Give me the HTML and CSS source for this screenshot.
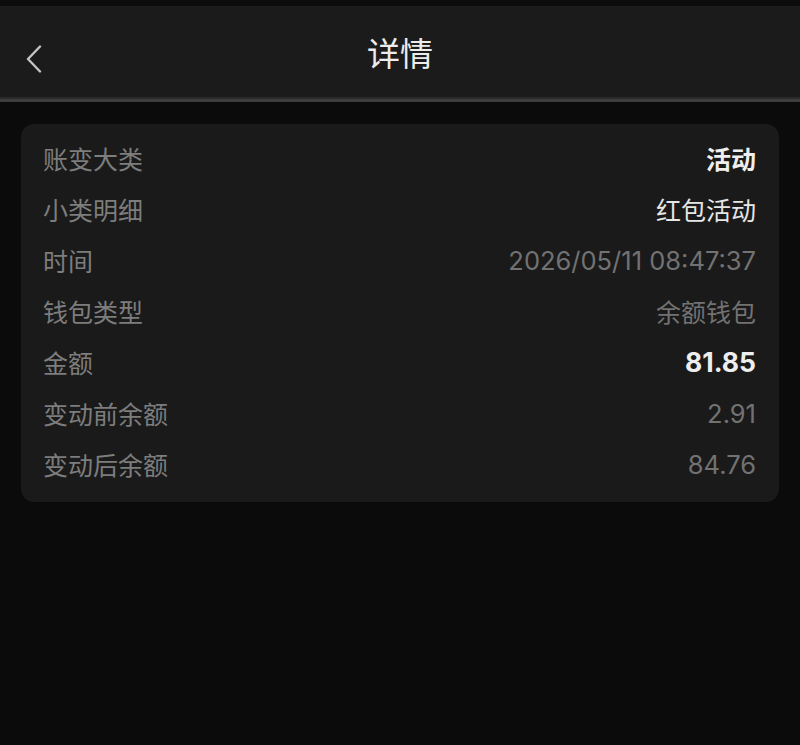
FILE: index.html
```html
<!DOCTYPE html>
<html lang="zh-CN">
<head>
<meta charset="utf-8">
<title>详情</title>
<link rel="stylesheet" href="styles.css">
</head>
<body>
<div class="page">
  <div class="topstrip"></div>
  <header class="navbar">
    <button class="back" aria-label="返回">
      <svg width="18" height="28" viewBox="0 0 18 28"><path d="M15 1.5 L3 14 L15 26.5" fill="none" stroke="#c4c4c4" stroke-width="2.4" stroke-linecap="round" stroke-linejoin="round"/></svg>
    </button>
    <h1 class="title">详情</h1>
  </header>
  <div class="divider"></div>
  <main class="content">
    <section class="card">
      <div class="row"><span class="label">账变大类</span><span class="value cjk strong">活动</span></div>
      <div class="row"><span class="label">小类明细</span><span class="value cjk light">红包活动</span></div>
      <div class="row"><span class="label">时间</span><span class="value num muted">2026/05/11 08:47:37</span></div>
      <div class="row"><span class="label">钱包类型</span><span class="value cjk muted">余额钱包</span></div>
      <div class="row"><span class="label">金额</span><span class="value num strong">81.85</span></div>
      <div class="row"><span class="label">变动前余额</span><span class="value num muted">2.91</span></div>
      <div class="row"><span class="label">变动后余额</span><span class="value num muted">84.76</span></div>
    </section>
  </main>
</div>
</body>
</html>
```

FILE: styles.css
```css
html, body {
  margin: 0;
  padding: 0;
  background: #0b0b0b;
}
body {
  font-family: "Noto Sans CJK SC", sans-serif;
  width: 800px;
  height: 745px;
  overflow: hidden;
}
.page {
  display: flex;
  flex-direction: column;
}
.topstrip {
  height: 6px;
  background: #0c0c0c;
}
.navbar {
  height: 91px;
  background: #1b1b1b;
  display: flex;
  align-items: center;
  justify-content: center;
  position: relative;
}
.back {
  position: absolute;
  left: 25px;
  top: 39px;
  width: 18px;
  height: 28px;
  padding: 0;
  border: 0;
  background: none;
  display: flex;
}
.title {
  margin: 0;
  font-family: "Noto Sans CJK SC", sans-serif;
  font-size: 33px;
  font-weight: 400;
  color: #ececec;
  line-height: 1;
  margin-top: 2px;
}
.divider {
  height: 2px;
  background: #2a2a2a;
  border-bottom: 3px solid #3d3d3d;
}
.content {
  padding: 22px 21px 0;
}
.card {
  background: #1a1a1a;
  border-radius: 13px;
  padding: 9px 23px 12px 22px;
  display: flex;
  flex-direction: column;
}
.row {
  height: 51px;
  display: flex;
  align-items: center;
  justify-content: space-between;
}
.label {
  color: #7d7d7d;
  font-family: "Noto Sans CJK SC", sans-serif;
  font-size: 25px;
  line-height: 1;
}
.value {
  line-height: 1;
}
.cjk {
  font-family: "Noto Sans CJK SC", sans-serif;
  font-size: 25px;
}
.num {
  font-family: Inter, "Liberation Sans", sans-serif;
  font-size: 25.5px;
}
.num.strong {
  font-size: 26.5px;
}
.strong {
  color: #eeeeee;
  font-weight: 700;
}
.light {
  color: #e6e6e6;
}
.muted {
  color: #727272;
}
```
